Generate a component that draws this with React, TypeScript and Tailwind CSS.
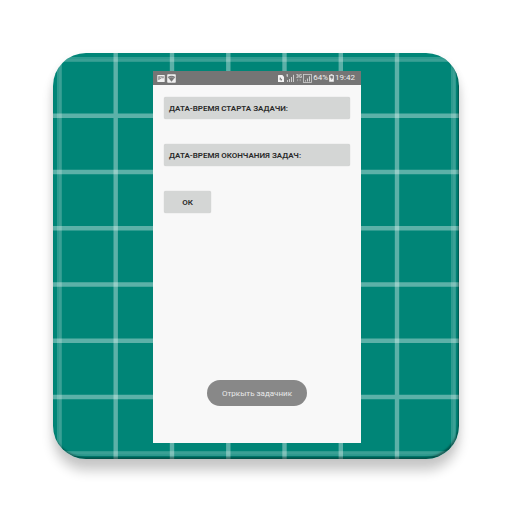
const gridLines = [62.7, 119, 175.3, 231.5, 287.8, 344];

function GridBackdrop() {
  return (
    <svg
      className="absolute inset-0 h-full w-full"
      viewBox="0 0 406 406"
      preserveAspectRatio="none"
      aria-hidden="true"
    >
      <rect width="406" height="406" fill="#008577" />
      <g stroke="#ffffff" strokeOpacity="0.18" strokeWidth="5">
        <path d="M6.500 0V406M400.500 0V406M0 6.500H406M0 400.500H406" />
        <path strokeOpacity="0.06" strokeWidth="2" d="M7 0V406M401 0V406M0 7H406M0 400H406" />
      </g>
      <g stroke="#ffffff" strokeOpacity="0.36" strokeWidth="4.400">
        {gridLines.map((p) => (
          <path key={p} d={`M${p} 0V406M0 ${p}H406`} />
        ))}
      </g>
    </svg>
  );
}

function PictureIcon() {
  return (
    <svg className="h-[7px] w-[8px]" viewBox="0 0 8 7" aria-hidden="true">
      <rect x="0.3" width="7.4" height="7" rx="0.6" fill="#f0f0f0" />
      <path d="M1.300 1.300H6.700V3.300H4.500L1.300 5.300Z" fill="#8a8a8a" />
      <path d="M2.500 3L3.500 2.300L4.300 3L5.500 2" fill="none" stroke="#f0f0f0" strokeWidth="0.8" />
    </svg>
  );
}

function WifiIcon() {
  return (
    <svg className="h-[9px] w-[9px]" viewBox="0 0 9 9" aria-hidden="true">
      <rect x="0.2" y="0.2" width="8.600" height="8.600" rx="0.8" fill="#f0f0f0" />
      <path d="M0.700 3Q4.500 0.400 8.300 3L4.500 7.800Z" fill="#777" />
      <path d="M1.500 4.100Q4.500 2.300 7.500 4.100" fill="none" stroke="#b5b5b5" strokeWidth="0.500" />
    </svg>
  );
}

function SimIcon() {
  return (
    <svg className="h-[7px] w-[6px]" viewBox="0 0 6 7" aria-hidden="true">
      <path d="M0.500 0H4.300L6 1.700V6.500Q6 7 5.500 7H0.500Q0 7 0 6.500V0.500Q0 0 0.500 0Z" fill="#f4f4f4" />
      <path d="M2.200 2.500V5M2.200 3L4 5H2.500" fill="none" stroke="#777" strokeWidth="0.900" />
    </svg>
  );
}

function SignalIcon() {
  return (
    <svg className="h-[8px] w-[8px]" viewBox="0 0 8 8" aria-hidden="true">
      <path d="M0.300 1H2M1.300 0.300V3M3.500 5V8M5.500 3V8M7.500 0.800V8" fill="none" stroke="#d8d8d8" strokeWidth="0.900" />
      <path d="M1.500 6V8" stroke="#c4c4c4" strokeWidth="1" />
    </svg>
  );
}

function NetworkIcon() {
  return (
    <svg className="h-[8px] w-[6px]" viewBox="0 0 6 8" aria-hidden="true">
      <path
        d="M0.300 0.600H2.200V3.400H0.300M0.900 2H2.200M5.700 0.600H3.700V3.400H5.500V2.100H4.700"
        fill="none"
        stroke="#d6d6d6"
        strokeWidth="0.800"
      />
      <path d="M1.600 5V7.200M4.200 5V7.200" stroke="#aaa" strokeWidth="0.800" />
    </svg>
  );
}

function BoxedSignalIcon() {
  return (
    <svg className="h-[9px] w-[9px]" viewBox="0 0 9 9" aria-hidden="true">
      <rect x="0.500" y="0.500" width="8" height="8" fill="none" stroke="#d0d0d0" strokeWidth="0.800" />
      <path d="M2.500 6.300V7.500M4.500 4.500V7.500M6.500 2.300V7.500" stroke="#d8d8d8" strokeWidth="0.900" />
    </svg>
  );
}

function BatteryIcon() {
  return (
    <svg className="h-[8px] w-[5px]" viewBox="0 0 5 8" aria-hidden="true">
      <path d="M1.500 0.300H3.500V1H4.800V7.700H0.200V1H1.500Z" fill="#f4f4f4" />
      <path d="M1.200 1.700H3.800V4L2.500 6.300V4.200H1.500Z" fill="#777" />
    </svg>
  );
}

function StatusBar() {
  return (
    <header className="flex h-[14px] items-center justify-between bg-[#757575] pr-[6px] pl-[4px] text-[8px] leading-[10px] text-[#f0f0f0]">
      <div className="flex items-center gap-[2px]">
        <PictureIcon />
        <WifiIcon />
      </div>
      <div className="flex items-center gap-px">
        <div className="flex items-center gap-[2px]">
          <SimIcon />
          <SignalIcon />
          <NetworkIcon />
        </div>
        <BoxedSignalIcon />
        <span>64%</span>
        <BatteryIcon />
        <time>19:42</time>
      </div>
    </header>
  );
}

const buttonStyle =
  "h-[22px] rounded-[2px] bg-[#d4d6d5] pt-px text-[8px] leading-[10px] font-semibold text-[#2a2a2a] shadow-[0_0_1px_#bbbbbb]";

export default function App() {
  return (
    <main
      className="min-h-screen bg-white p-[53px]"
      style={{ fontFamily: 'Roboto, "Liberation Sans", sans-serif' }}
    >
      <div className="rounded-[33px] shadow-[0_12px_12px_rgba(0,0,0,0.2),0_2px_8px_rgba(0,0,0,0.06)]">
        <div className="relative overflow-hidden rounded-[33px] pt-[18px] pr-[98px] pb-4 pl-[100px]">
          <GridBackdrop />
          <section className="relative aspect-[208/372] bg-[#f8f8f8]">
            <StatusBar />
            <div className="flex flex-col items-start gap-[25px] px-[11px] pt-3">
              <button type="button" className={`${buttonStyle} w-full pl-[5px] text-left`}>
                ДАТА-ВРЕМЯ СТАРТА ЗАДАЧИ:
              </button>
              <button type="button" className={`${buttonStyle} w-full pl-[5px] text-left`}>
                ДАТА-ВРЕМЯ ОКОНЧАНИЯ ЗАДАЧ:
              </button>
              <button type="button" className={`${buttonStyle} w-[47px]`}>
                ОК
              </button>
            </div>
            <div className="absolute inset-x-0 bottom-[37px] flex justify-center">
              <div
                role="status"
                className="flex h-[26px] items-center rounded-full bg-[#888888] px-[15px] pt-px text-[8px] leading-[10px] whitespace-nowrap text-[#e8e8e8]"
              >
                Отркыть задачник
              </div>
            </div>
          </section>
          <div className="pointer-events-none absolute inset-0 rounded-[33px] shadow-[inset_-1px_-2px_2px_rgba(0,0,0,0.4)]" />
        </div>
      </div>
    </main>
  );
}
